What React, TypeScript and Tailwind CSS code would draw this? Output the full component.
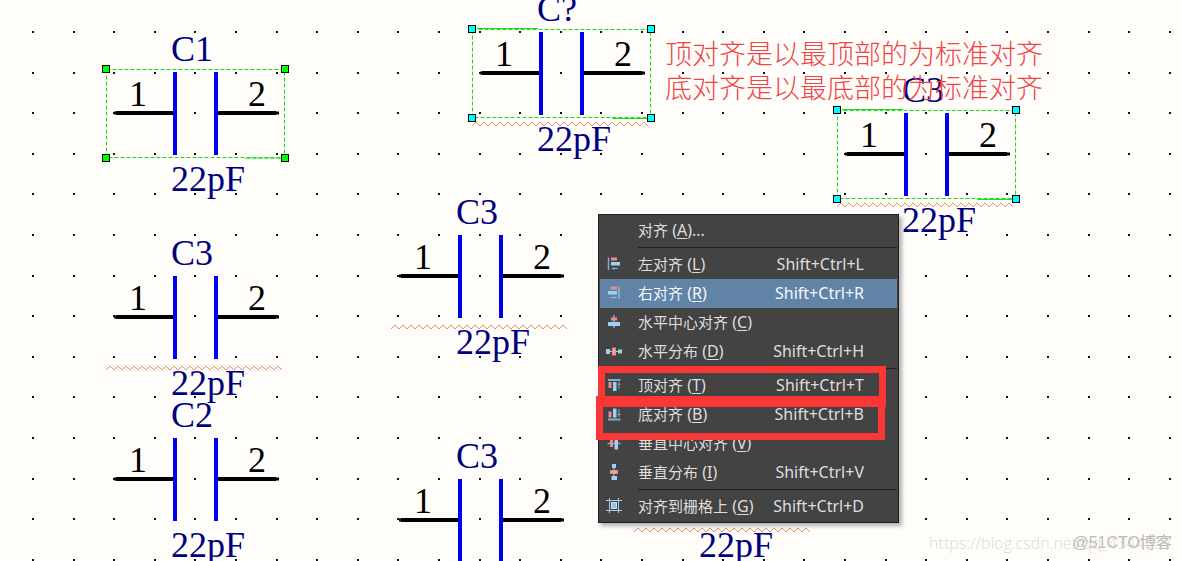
import React from "react";

const GRID = 40.6;
const GRID_X = 33;
const GRID_Y = 32;
const NAVY = "#00007f";

type Selection = "lime" | "cyan";

interface Capacitor {
  x: number;
  y: number;
  name: string;
  squiggle?: boolean;
  selection?: Selection;
}

const capacitors: Capacitor[] = [
  { x: 196, y: 113, name: "C1", selection: "lime" },
  { x: 562, y: 73, name: "C?", selection: "cyan", squiggle: true },
  { x: 927, y: 154, name: "C3", selection: "cyan", squiggle: true },
  { x: 196, y: 317, name: "C3", squiggle: true },
  { x: 196, y: 479, name: "C2" },
  { x: 481, y: 276, name: "C3", squiggle: true },
  { x: 481, y: 520, name: "C3" },
  { x: 724, y: 479, name: "C3", squiggle: true },
];

const squigglePath = "M-90 53" + " l4 -4 l4 4".repeat(22);

function GridDots() {
  const dots: React.ReactElement[] = [];
  for (let r = 0; r < 30; r++) {
    for (let c = 0; c < 60; c++) {
      dots.push(
        <rect
          key={`${r}-${c}`}
          x={Math.round(GRID_X + c * GRID) - 1}
          y={Math.round(GRID_Y + r * GRID) - 1}
          width="2"
          height="2"
        />,
      );
    }
  }
  return <g fill="#111">{dots}</g>;
}

function SelectionBox({ kind }: { kind: Selection }) {
  const fill = kind === "lime" ? "#00ff00" : "#00ffff";
  const corners = [
    [-90, -44],
    [89, -44],
    [-90, 45],
    [89, 45],
  ];
  return (
    <g>
      <rect x="-89.5" y="-43.5" width="178" height="88" fill="none" stroke="#18d818" strokeDasharray="4 2" />
      {kind === "cyan" && <path d="M-85 -44.5H-24M50 45.5H86" stroke="#1fe01f" />}
      {kind === "lime" && (
        <path d={"M49 45" + " l3 1 l3 -1".repeat(6)} stroke="#5fe05f" fill="none" />
      )}
      {corners.map(([x, y]) => (
        <rect key={`${x},${y}`} x={x - 3.5} y={y - 3.5} width="7" height="7" fill={fill} stroke="#000" />
      ))}
    </g>
  );
}

function CapacitorSymbol({ cap }: { cap: Capacitor }) {
  return (
    <g transform={`translate(${cap.x} ${cap.y})`} fontFamily='"Liberation Serif", serif' fontSize="36">
      {cap.squiggle && <path d={squigglePath} fill="none" stroke="#e08a50" strokeWidth="0.9" />}
      {cap.selection && <SelectionBox kind={cap.selection} />}
      <path d="M-80 0H-22M22 0H80" stroke="#000" strokeWidth="4" />
      <path d="M-82 0H-80M80 0H83" stroke="#000" strokeWidth="3" />
      <path d="M-21 -41V42M20 -41V42" stroke="#0000f0" strokeWidth="4" />
      <text x="-25" y="-52" fill={NAVY}>{cap.name}</text>
      <text x="-25" y="78" fill={NAVY}>22pF</text>
      <text x="-67" y="-7">1</text>
      <text x="52" y="-7">2</text>
    </g>
  );
}

const BLUE = "#9fd0ee";
const BAR = "#86a9d4";
const RED = "#e88a88";

function Icon({ children }: { children: React.ReactNode }) {
  return (
    <svg width="16" height="16" viewBox="0 0 16 16" fill="none" aria-hidden="true">
      {children}
    </svg>
  );
}

const icons: Record<string, React.ReactElement> = {
  left: (
    <Icon>
      <path d="M2.5 1.5V14" stroke={BAR} strokeWidth="1.5" />
      <rect x="5" y="1.5" width="6" height="3" fill={RED} />
      <rect x="5" y="6" width="9" height="3.5" fill={BLUE} />
      <path d="M5.5 12.5H12M8 11.2V13.8" stroke={BAR} />
    </Icon>
  ),
  right: (
    <Icon>
      <path d="M13 1.5V14" stroke="#8fb4e0" strokeWidth="1.5" />
      <rect x="5" y="1.5" width="6" height="3" fill={RED} />
      <rect x="2" y="6" width="9" height="3.5" fill={BLUE} />
      <path d="M4 12.5H10.5M8.5 11.2V13.8" stroke="#8fb4e0" />
    </Icon>
  ),
  hcenter: (
    <Icon>
      <path d="M8 1V14" stroke={BAR} strokeWidth="1.5" />
      <rect x="5" y="3.5" width="6" height="3" fill={RED} />
      <rect x="2" y="8" width="12" height="4" fill={BLUE} />
    </Icon>
  ),
  hdist: (
    <Icon>
      <path d="M1 8.5H15" stroke={BLUE} />
      <rect x="0" y="6" width="4" height="5" fill={BLUE} />
      <rect x="6" y="4.5" width="4" height="8" fill={RED} />
      <path d="M8 6V11" stroke="#f6c4c2" />
      <rect x="12" y="6.5" width="4" height="4" fill={BLUE} />
    </Icon>
  ),
  top: (
    <Icon>
      <path d="M2 3H14.5" stroke={BAR} strokeWidth="2" />
      <rect x="2.5" y="5" width="3" height="6" fill={RED} />
      <rect x="7" y="5" width="3.5" height="9" fill={BLUE} />
      <path d="M13 5V12M11.5 7.2H14.5" stroke={BAR} />
    </Icon>
  ),
  bottom: (
    <Icon>
      <path d="M2 13.5H14.5" stroke={BAR} strokeWidth="2" />
      <rect x="2.5" y="5.5" width="3" height="6" fill={RED} />
      <rect x="7" y="2.5" width="3.5" height="9" fill={BLUE} />
      <path d="M13 3V11M11.5 8.5H14.5" stroke={BAR} />
    </Icon>
  ),
  vcenter: (
    <Icon>
      <path d="M1.5 8.5H14.5" stroke={BAR} strokeWidth="1.5" />
      <rect x="4" y="5" width="3" height="7" fill={RED} />
      <rect x="8.5" y="2.5" width="3.5" height="12" fill={BLUE} />
    </Icon>
  ),
  vdist: (
    <Icon>
      <path d="M8 1V15" stroke={BLUE} />
      <rect x="6" y="0" width="4" height="4" fill={BLUE} />
      <rect x="4" y="6" width="8" height="4" fill={RED} />
      <path d="M5.5 8H10.5" stroke="#f6c4c2" />
      <rect x="5.5" y="12" width="5.5" height="4" fill={BLUE} />
    </Icon>
  ),
  grid: (
    <Icon>
      <path d="M3.5 0V15M12.5 0V15M0 2.5H16M0 12.5H16" stroke="#a9c8e6" />
      <rect x="5.5" y="4.5" width="5" height="6" fill="#8fc0ee" stroke="#c4e2fa" />
    </Icon>
  ),
};

interface Command {
  icon?: string;
  label: string;
  keyChar: string;
  suffix?: string;
  shortcut?: string;
  active?: boolean;
}

const groups: Command[][] = [
  [{ label: "对齐", keyChar: "A", suffix: "..." }],
  [
    { icon: "left", label: "左对齐", keyChar: "L", shortcut: "Shift+Ctrl+L" },
    { icon: "right", label: "右对齐", keyChar: "R", shortcut: "Shift+Ctrl+R", active: true },
    { icon: "hcenter", label: "水平中心对齐", keyChar: "C" },
    { icon: "hdist", label: "水平分布", keyChar: "D", shortcut: "Shift+Ctrl+H" },
  ],
  [
    { icon: "top", label: "顶对齐", keyChar: "T", shortcut: "Shift+Ctrl+T" },
    { icon: "bottom", label: "底对齐", keyChar: "B", shortcut: "Shift+Ctrl+B" },
    { icon: "vcenter", label: "垂直中心对齐", keyChar: "V" },
    { icon: "vdist", label: "垂直分布", keyChar: "I", shortcut: "Shift+Ctrl+V" },
  ],
  [{ icon: "grid", label: "对齐到栅格上", keyChar: "G", shortcut: "Shift+Ctrl+D" }],
];

function MenuItem({ item }: { item: Command }) {
  const tone = item.active ? "bg-[#6083a6] text-[#f4f8fc]" : "text-[#dedede]";
  return (
    <button
      type="button"
      role="menuitem"
      className={`flex h-[29px] w-full items-start pr-[33px] pl-[6px] text-left leading-[29px] ${tone}`}
    >
      <span className="w-8 shrink-0 pt-[6px]">{item.icon && icons[item.icon]}</span>
      <span className="flex-1 whitespace-pre text-[15px]">
        {item.label}
        <span className="text-base leading-[29px]">
          {" "}(<u className="underline underline-offset-2">{item.keyChar}</u>){item.suffix}
        </span>
      </span>
      {item.shortcut && <span className="text-base leading-[29px]">{item.shortcut}</span>}
    </button>
  );
}

function ContextMenu() {
  return (
    <div
      role="menu"
      className="absolute top-[214px] left-[598px] w-[301px] border border-[#1f1f1f] bg-[#434343] p-px font-['Noto_Sans','Noto_Sans_CJK_SC',sans-serif] shadow-[3px_3px_4px_rgba(0,0,0,0.3)]"
    >
      {groups.map((group, i) => (
        <React.Fragment key={i}>
          {i > 0 && <div role="separator" className="my-[2px] ml-[38px] h-px bg-[#222]" />}
          {group.map((item) => (
            <MenuItem key={item.label} item={item} />
          ))}
        </React.Fragment>
      ))}
      <div className="pointer-events-none absolute top-[151px] -left-px h-[41px] w-[288px] border-[7px] border-[#fb3735]" />
      <div className="pointer-events-none absolute top-[181px] -left-[3px] h-[44px] w-[289px] border-[7px] border-[#fb3735]" />
    </div>
  );
}

export default function App() {
  return (
    <main className="relative min-h-screen w-full overflow-hidden bg-[#fffdfa]">
      <svg className="absolute inset-0 h-full w-full" aria-label="schematic">
        <GridDots />
        {capacitors.map((cap) => (
          <CapacitorSymbol key={`${cap.x}-${cap.y}`} cap={cap} />
        ))}
      </svg>
      <p className="absolute top-[36px] left-[665px] font-['Noto_Sans_CJK_SC',sans-serif] text-[27px] leading-[34px] font-light whitespace-nowrap text-[#ee4444]">
        顶对齐是以最顶部的为标准对齐
        <br />
        底对齐是以最底部的为标准对齐
      </p>
      <ContextMenu />
      <span className="absolute right-[10px] bottom-[6px] font-['Open_Sans',sans-serif] text-base leading-6 font-light whitespace-nowrap text-[#dcdad8]">
        https://blog.csdn.net/qq_4344557
      </span>
      <span className="absolute right-[10px] bottom-[6px] font-['Liberation_Sans','Noto_Sans_CJK_SC',sans-serif] text-base leading-6 whitespace-nowrap text-[#bdbbb9]">
        @51CTO博客
      </span>
    </main>
  );
}
